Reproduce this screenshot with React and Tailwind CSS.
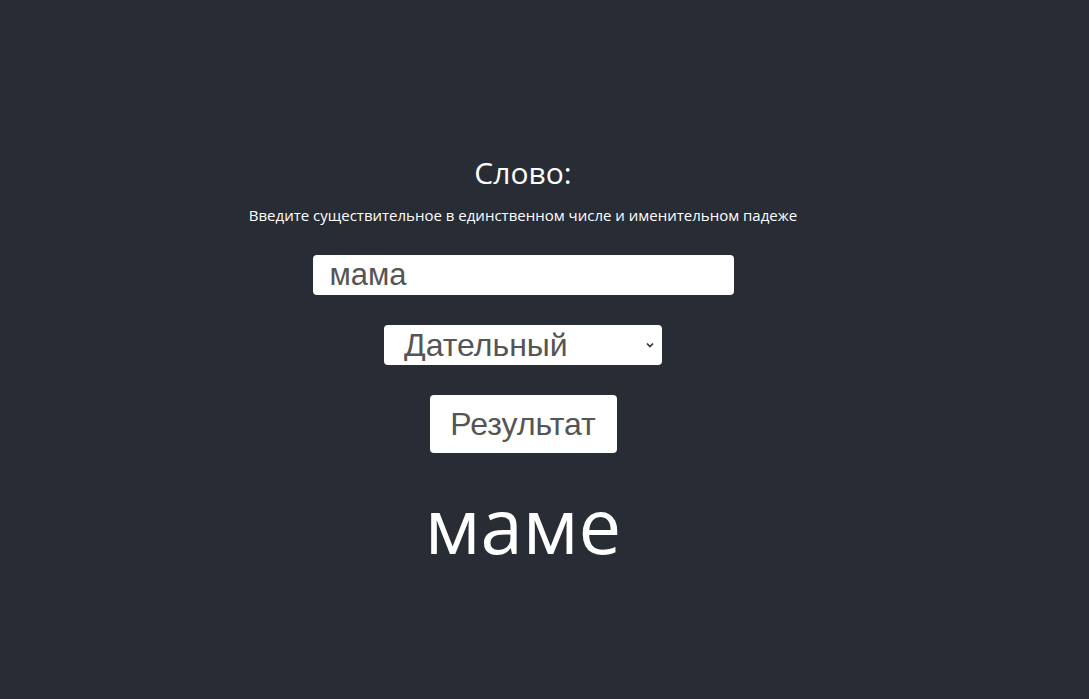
import React, { useState } from 'react';

const App = () => {
  const [word, setWord] = useState('мама');
  const [caseName, setCaseName] = useState('Дательный');

  return (
    <div className="min-h-screen w-full bg-[#282c34] flex flex-col items-center justify-center pr-[43px] text-white font-['Open_Sans',sans-serif]">
      <div className="flex flex-col items-center pt-[26px]">
        <h2 className="text-[30px] leading-[40px]">Слово:</h2>
        <p className="text-[15px] leading-[20px] mt-[12px]">
          Введите существительное в единственном числе и именительном падеже
        </p>

        <input
          value={word}
          onChange={(e) => setWord(e.target.value)}
          className="mt-[30px] w-[421px] h-[40px] bg-white rounded-[4px] px-[17px] text-[31px] leading-none text-[#555] font-['Liberation_Sans',Arial,sans-serif] outline-none"
        />

        <div className="relative mt-[30px] w-[278px] h-[40px]">
          <select
            value={caseName}
            onChange={(e) => setCaseName(e.target.value)}
            className="appearance-none w-full h-full bg-white rounded-[4px] pl-[20px] py-0 text-[32px] leading-none text-[#555] font-['Liberation_Sans',Arial,sans-serif] outline-none"
          >
            <option>Именительный</option>
            <option>Родительный</option>
            <option>Дательный</option>
            <option>Винительный</option>
            <option>Творительный</option>
            <option>Предложный</option>
          </select>
          <svg className="absolute right-[7px] top-[15px] w-[10px] h-[10px] pointer-events-none" viewBox="0 0 10 10">
            <path d="M2 3.5 L5 6.5 L8 3.5" fill="none" stroke="#333" strokeWidth="1.6" />
          </svg>
        </div>

        <button className="mt-[30px] w-[187px] h-[58px] bg-white rounded-[4px] text-[32px] text-[#555] font-['Liberation_Sans',Arial,sans-serif]">
          Результат
        </button>

        <div className="mt-[24px] text-[76px] leading-[96px]">маме</div>
      </div>
    </div>
  );
};

export default App;
